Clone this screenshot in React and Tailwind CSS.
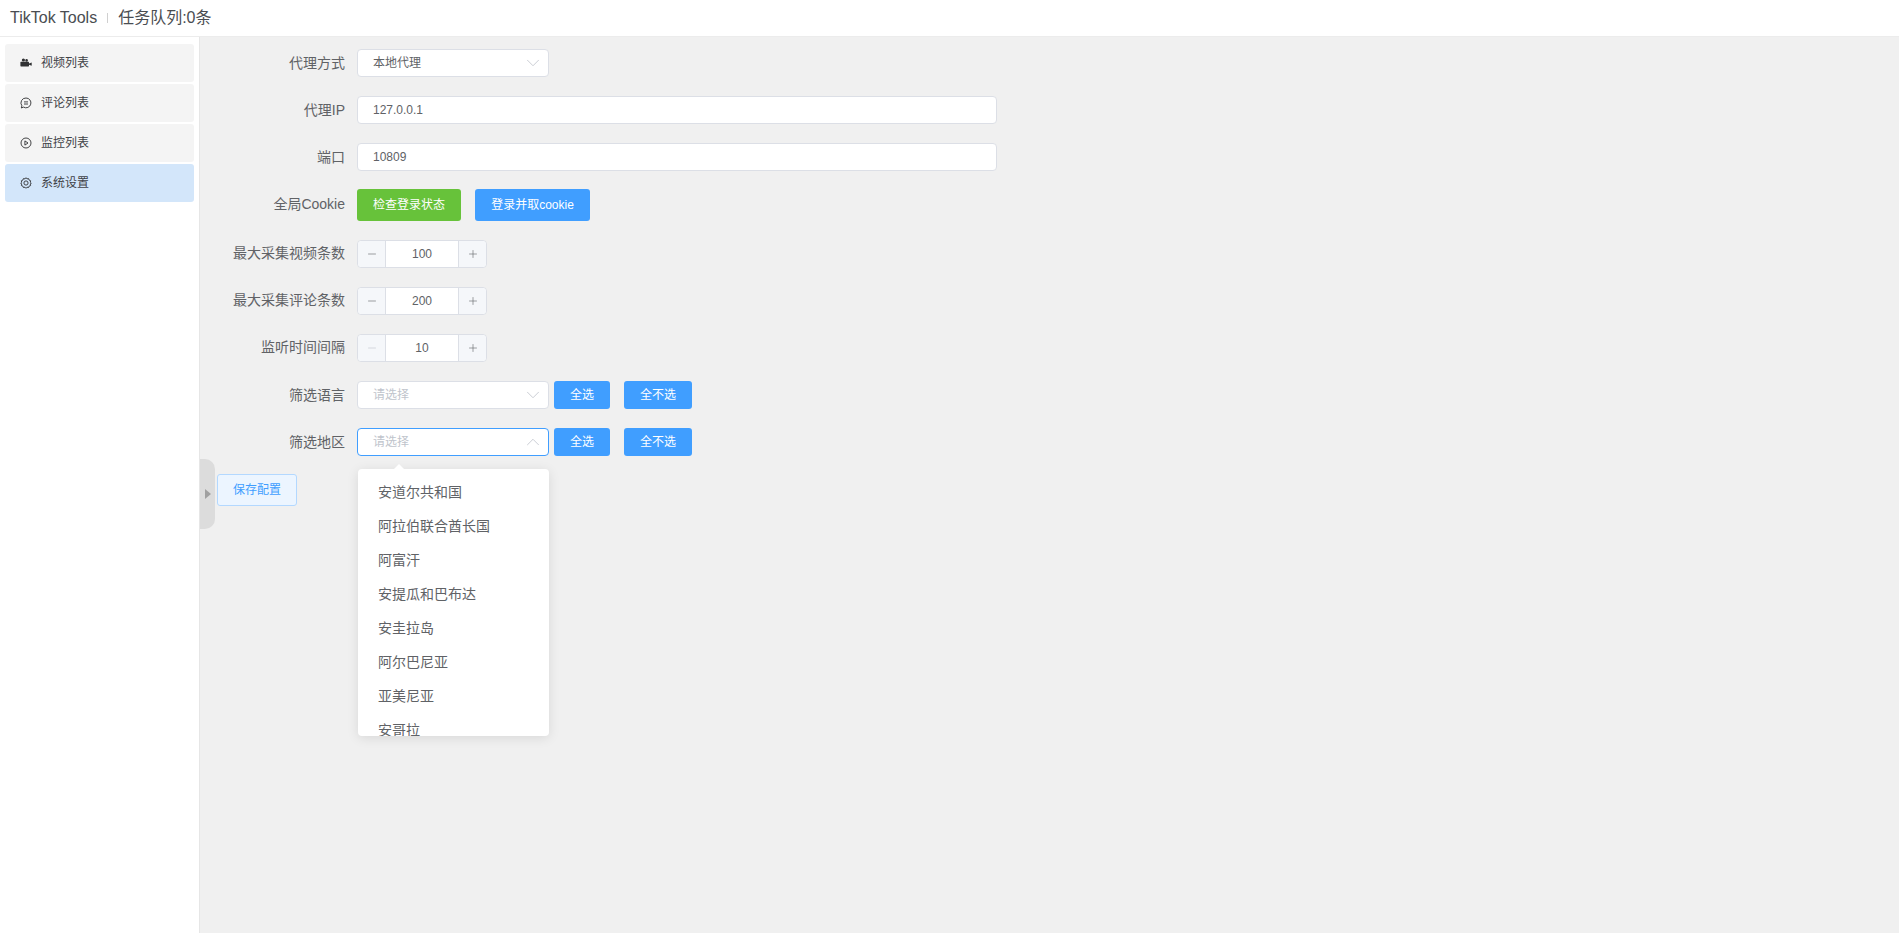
import React from "react";
import { ChevronDown, ChevronUp, Minus, Plus } from "lucide-react";

const font = { fontFamily: '"Liberation Sans","Noto Sans CJK SC",sans-serif' };

function Row({ label, children, raised }) {
  return (
    <div className="flex items-center h-[28px] mb-[19px]">
      <div className={`w-[345px] shrink-0 text-right text-[14px] text-[#606266] ${raised ? "pb-[2px]" : ""}`}>{label}</div>
      <div className="ml-[12px] flex items-center">{children}</div>
    </div>
  );
}

function Select({ value, placeholder, open }) {
  return (
    <div className={`w-[192px] h-[28px] bg-white rounded-[4px] border flex items-center justify-between pl-[15px] pr-[4px] text-[12px] ${open ? "border-[#409eff]" : "border-[#dcdfe6]"} ${value ? "text-[#606266]" : "text-[#c0c4cc]"}`}>
      <span>{value || placeholder}</span>
      {open ? <ChevronUp size={22} strokeWidth={0.9} className="text-[#c0c4cc]" /> : <ChevronDown size={22} strokeWidth={0.9} className="text-[#c0c4cc]" />}
    </div>
  );
}

function TextInput({ value }) {
  return (
    <div className="w-[640px] h-[28px] bg-white rounded-[4px] border border-[#dcdfe6] flex items-center pl-[15px] text-[12px] text-[#606266]">{value}</div>
  );
}

function NumberBox({ value, minDisabled }) {
  return (
    <div className="w-[130px] h-[28px] bg-white rounded-[4px] border border-[#dcdfe6] flex items-center text-[12px] text-[#606266]">
      <div className="w-[28px] h-full bg-[#f5f7fa] border-r border-[#dcdfe6] rounded-l-[4px] flex items-center justify-center">
        <Minus size={12} strokeWidth={1.2} className={minDisabled ? "text-[#c0c4cc]" : "text-[#606266]"} />
      </div>
      <div className="flex-1 text-center">{value}</div>
      <div className="w-[28px] h-full bg-[#f5f7fa] border-l border-[#dcdfe6] rounded-r-[4px] flex items-center justify-center">
        <Plus size={12} strokeWidth={1.2} className="text-[#606266]" />
      </div>
    </div>
  );
}

function Btn({ children, className }) {
  return <div className={`h-[28px] rounded-[3px] bg-[#409eff] text-white text-[12px] flex items-center justify-center ${className}`}>{children}</div>;
}

function VideoIcon() {
  return (
    <svg width="12" height="12" viewBox="0 0 12 12" fill="#303133">
      <circle cx="3.4" cy="3" r="1.6" />
      <circle cx="6.6" cy="3.4" r="1.3" />
      <rect x="0.4" y="4.8" width="8.6" height="4.6" rx="0.6" />
      <path d="M9 6.4 L11.7 5.4 V8.8 L9 7.8 Z" />
    </svg>
  );
}

function ChatIcon() {
  return (
    <svg width="12" height="12" viewBox="0 0 12 12" fill="none" stroke="#303133" strokeWidth="0.9">
      <path d="M6 1a4.9 4.9 0 1 1-2.5 9.1L1.3 11l.6-2.2A4.9 4.9 0 0 1 6 1Z" />
      <path d="M4 4.9h4M4 7h4" />
    </svg>
  );
}

function PlayIcon() {
  return (
    <svg width="12" height="12" viewBox="0 0 12 12" fill="none" stroke="#303133" strokeWidth="0.9">
      <circle cx="6" cy="6" r="5" />
      <path d="M4.9 3.9 8 6 4.9 8.1Z" />
    </svg>
  );
}

function GearIcon() {
  return (
    <svg width="12" height="12" viewBox="0 0 12 12" fill="none" stroke="#303133" strokeWidth="0.9">
      <circle cx="6" cy="6" r="2.1" />
      <path d="M6 .7 7 1.9l1.6-.3.5 1.5 1.5.6-.3 1.5L11.3 6l-1 1 .3 1.6-1.5.5-.5 1.4-1.6-.3L6 11.3l-1-1.1-1.6.3-.5-1.4-1.5-.5.3-1.6-1-1 1-.8-.3-1.5 1.5-.6.5-1.5L5 1.9Z" />
    </svg>
  );
}

function NavItem({ icon, label, active }) {
  return (
    <div className={`h-[38px] mb-[2px] rounded-[3px] flex items-center pl-[15px] text-[12px] text-[#3f4247] ${active ? "bg-[#d3e6fa]" : "bg-[#f4f4f4]"}`}>
      <span className="w-[12px] flex items-center justify-center">{icon}</span>
      <span className="ml-[9px]">{label}</span>
    </div>
  );
}

const regions = ["安道尔共和国", "阿拉伯联合酋长国", "阿富汗", "安提瓜和巴布达", "安圭拉岛", "阿尔巴尼亚", "亚美尼亚", "安哥拉"];

export default function App() {
  return (
    <div className="w-[1899px] h-[933px] flex flex-col overflow-hidden bg-white" style={font}>
      <header className="h-[37px] shrink-0 flex items-center pl-[10px] bg-white border-b border-[#ececec] text-[#303133]">
        <span className="text-[16px] text-[#4a4d52]">TikTok Tools</span>
        <span className="mx-[10px] w-px h-[10px] bg-[#d0d0d0]" />
        <span className="text-[16px] text-[#4a4d52]">任务队列:0条</span>
      </header>
      <div className="flex flex-1 min-h-0">
        <aside className="w-[200px] shrink-0 bg-white border-r border-[#e6e6e6] pl-[5px] pr-[5px] pt-[7px]">
          <NavItem icon={<VideoIcon />} label="视频列表" />
          <NavItem icon={<ChatIcon />} label="评论列表" />
          <NavItem icon={<PlayIcon />} label="监控列表" />
          <NavItem icon={<GearIcon />} label="系统设置" active />
        </aside>
        <main className="relative flex-1 bg-[#f0f0f0] pt-[12px]">
          <div className="-ml-[200px] relative">
            <Row label="代理方式"><Select value="本地代理" /></Row>
            <Row label="代理IP"><TextInput value="127.0.0.1" /></Row>
            <Row label="端口"><TextInput value="10809" /></Row>
            <div className="flex items-center h-[32px] mb-[19px] -mt-[1px]">
              <div className="w-[345px] pb-[2px] text-right text-[14px] text-[#606266]">全局Cookie</div>
              <div className="ml-[12px] flex">
                <div className="w-[104px] h-[32px] rounded-[3px] bg-[#67c23a] text-white text-[12px] flex items-center justify-center">检查登录状态</div>
                <div className="ml-[14px] w-[115px] h-[32px] rounded-[3px] bg-[#409eff] text-white text-[12px] flex items-center justify-center">登录并取cookie</div>
              </div>
            </div>
            <Row raised label="最大采集视频条数"><NumberBox value="100" /></Row>
            <Row raised label="最大采集评论条数"><NumberBox value="200" /></Row>
            <Row raised label="监听时间间隔"><NumberBox value="10" minDisabled /></Row>
            <Row label="筛选语言">
              <Select placeholder="请选择" />
              <Btn className="ml-[5px] w-[56px]">全选</Btn>
              <Btn className="ml-[14px] w-[68px]">全不选</Btn>
            </Row>
            <Row label="筛选地区">
              <Select placeholder="请选择" open />
              <Btn className="ml-[5px] w-[56px]">全选</Btn>
              <Btn className="ml-[14px] w-[68px]">全不选</Btn>
            </Row>
            <div className="-mt-[1px] ml-[217px] w-[80px] h-[32px] rounded-[3px] bg-[#ecf5ff] border border-[#b3d8ff] text-[#409eff] text-[12px] flex items-center justify-center">保存配置</div>
          </div>

          <div className="absolute left-0 top-[422px] w-[15px] h-[70px] bg-[#dcdcdc] rounded-r-[10px] flex items-center justify-center">
            <span className="w-0 h-0 border-y-[5px] border-y-transparent border-l-[6px] border-l-[#a0a0a0]" />
          </div>

          <div className="absolute left-[158px] top-[432px] w-[191px] h-[267px] bg-white rounded-[4px] shadow-[0_2px_12px_0_rgba(0,0,0,0.1)]">
            <span className="absolute -top-[5px] left-[35px] w-0 h-0 border-x-[6px] border-x-transparent border-b-[6px] border-b-white" />
            <div className="h-full overflow-hidden pt-[6px] rounded-[4px]">
              {regions.map((r) => (
                <div key={r} className="h-[34px] leading-[34px] pl-[20px] text-[14px] text-[#606266]">{r}</div>
              ))}
            </div>
          </div>
        </main>
      </div>
    </div>
  );
}
